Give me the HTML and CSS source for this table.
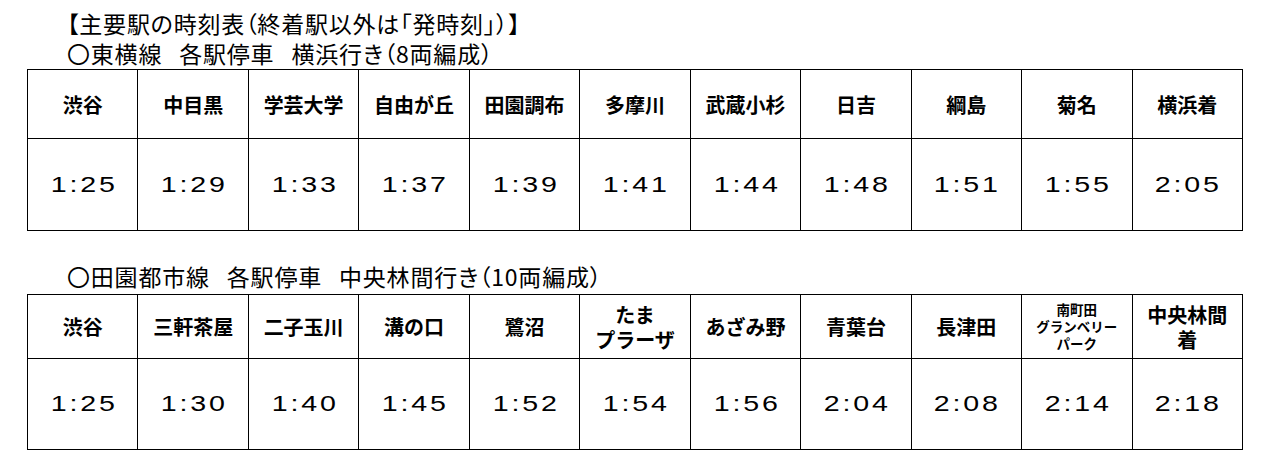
FILE: index.html
```html
<!DOCTYPE html>
<html lang="ja">
<head>
<meta charset="utf-8">
<title>主要駅の時刻表</title>
<link rel="stylesheet" href="styles.css">
</head>
<body>
<div class="page">
  <div class="heading">
    <p class="title">【主要駅の時刻表（終着駅以外は「発時刻」）】</p>
    <p class="line-title">〇東横線<span class="sp"> </span>各駅停車<span class="sp"> </span>横浜行き（8両編成）</p>
  </div>
  <table class="tt tt1">
    <tr class="hd">
      <th>渋谷</th><th>中目黒</th><th>学芸大学</th><th>自由が丘</th><th>田園調布</th><th>多摩川</th><th>武蔵小杉</th><th>日吉</th><th>綱島</th><th>菊名</th><th>横浜着</th>
    </tr>
    <tr class="tm">
      <td><span class="t">1:25</span></td><td><span class="t">1:29</span></td><td><span class="t">1:33</span></td><td><span class="t">1:37</span></td><td><span class="t">1:39</span></td><td><span class="t">1:41</span></td><td><span class="t">1:44</span></td><td><span class="t">1:48</span></td><td><span class="t">1:51</span></td><td><span class="t">1:55</span></td><td><span class="t">2:05</span></td>
    </tr>
  </table>
  <div class="heading heading2">
    <p class="line-title">〇田園都市線<span class="sp"> </span>各駅停車<span class="sp"> </span>中央林間行き（10両編成）</p>
  </div>
  <table class="tt tt2">
    <tr class="hd">
      <th>渋谷</th><th>三軒茶屋</th><th>二子玉川</th><th>溝の口</th><th>鷺沼</th><th>たま<br>プラーザ</th><th>あざみ野</th><th>青葉台</th><th>長津田</th><th class="small">南町田<br>グランベリー<br>パーク</th><th>中央林間<br>着</th>
    </tr>
    <tr class="tm">
      <td><span class="t">1:25</span></td><td><span class="t">1:30</span></td><td><span class="t">1:40</span></td><td><span class="t">1:45</span></td><td><span class="t">1:52</span></td><td><span class="t">1:54</span></td><td><span class="t">1:56</span></td><td><span class="t">2:04</span></td><td><span class="t">2:08</span></td><td><span class="t">2:14</span></td><td><span class="t">2:18</span></td>
    </tr>
  </table>
</div>
</body>
</html>
```
FILE: styles.css
```css
html, body {
  margin: 0;
  padding: 0;
  background: #fff;
  color: #000;
}
body {
  font-family: "Noto Sans CJK JP", "Noto Sans", sans-serif;
}
.page {
  padding: 8px 0 0 27px;
}
.heading p {
  margin: 0;
  font-size: 23px;
  line-height: 30px;
  font-weight: 400;
  letter-spacing: 0.8px;
  white-space: nowrap;
  font-feature-settings: "palt";
}
.sp {
  display: inline-block;
  width: 17px;
}
.title {
  padding-left: 40px;
}
.line-title {
  padding-left: 40px;
}
.heading2 {
  margin-top: 30px;
}
.tt {
  border-collapse: collapse;
  table-layout: fixed;
  width: 1216px;
  margin-top: 1px;
}
.tt2 {
  margin-top: 3px;
}
.tt th, .tt td {
  border: 1px solid #000;
  text-align: center;
  vertical-align: middle;
  padding: 0;
}
.tt th {
  font-weight: 700;
  font-size: 20px;
  line-height: 25px;
}
.tt th.small {
  font-size: 13.5px;
  line-height: 17px;
}
.tt1 .hd th { height: 68px; }
.tt1 .tm td { height: 91px; }
.tt2 .hd th { height: 63px; }
.tt2 .tm td { height: 90px; }
.tt td {
  font-family: "Liberation Sans", Arial, sans-serif;
  font-size: 22px;
}
.t {
  display: inline-block;
  letter-spacing: 2.2px;
  padding-left: 2.2px;
  transform: scaleX(1.3);
}
```
